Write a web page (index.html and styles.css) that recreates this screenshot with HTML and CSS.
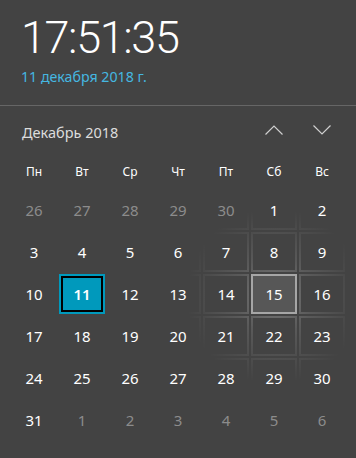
FILE: index.html
```html
<!DOCTYPE html>
<html lang="ru">
<head>
<meta charset="utf-8">
<link rel="stylesheet" href="styles.css">
</head>
<body>
<div class="flyout">
  <div class="clock">
    <div class="time">17:51:35</div>
    <div class="date">11 декабря 2018 г.</div>
  </div>
  <div class="calendar">
    <div class="month-bar">
      <div class="month">Декабрь 2018</div>
      <div class="nav">
        <span class="nav-btn"><svg width="18" height="10" viewBox="0 0 18 10"><path d="M0.5 9.5 L9 1 L17.5 9.5" fill="none" stroke="#d0d0d0" stroke-width="1.2"/></svg></span>
        <span class="nav-btn"><svg width="18" height="10" viewBox="0 0 18 10"><path d="M0.5 0.5 L9 9 L17.5 0.5" fill="none" stroke="#d0d0d0" stroke-width="1.2"/></svg></span>
      </div>
    </div>
    <div class="dow">
      <span>Пн</span><span>Вт</span><span>Ср</span><span>Чт</span><span>Пт</span><span>Сб</span><span>Вс</span>
    </div>
    <div class="days">
      <span class="day other">26</span><span class="day other">27</span><span class="day other">28</span><span class="day other">29</span><span class="day other">30</span><span class="day">1</span><span class="day">2</span>
      <span class="day">3</span><span class="day">4</span><span class="day">5</span><span class="day">6</span><span class="day">7</span><span class="day">8</span><span class="day">9</span>
      <span class="day">10</span><span class="day today">11</span><span class="day">12</span><span class="day">13</span><span class="day">14</span><span class="day hover">15</span><span class="day">16</span>
      <span class="day">17</span><span class="day">18</span><span class="day">19</span><span class="day">20</span><span class="day">21</span><span class="day">22</span><span class="day">23</span>
      <span class="day">24</span><span class="day">25</span><span class="day">26</span><span class="day">27</span><span class="day">28</span><span class="day">29</span><span class="day">30</span>
      <span class="day">31</span><span class="day other">1</span><span class="day other">2</span><span class="day other">3</span><span class="day other">4</span><span class="day other">5</span><span class="day other">6</span>
    </div>
  </div>
</div>
</body>
</html>
```
FILE: styles.css
```css
html, body {
  margin: 0;
  padding: 0;
  background: #434343;
}
body {
  width: 356px;
  height: 458px;
  overflow: hidden;
  font-family: "Noto Sans", "Open Sans", "Liberation Sans", sans-serif;
  color: #fff;
}
.flyout {
  width: 356px;
  height: 458px;
}
.clock {
  height: 106px;
  box-sizing: border-box;
  padding: 9px 0 0 21px;
  border-bottom: 1px solid #666;
}
.time {
  font-family: Roboto, "Open Sans", sans-serif;
  font-weight: 300;
  font-size: 45px;
  line-height: 57px;
  letter-spacing: -1.4px;
  color: #fff;
}
.date {
  margin-top: 1px;
  font-size: 14.2px;
  line-height: 20px;
  color: #45b7e0;
}
.calendar {
  padding: 0 10px;
}
.month-bar {
  height: 52px;
  display: flex;
  align-items: center;
  justify-content: space-between;
}
.month {
  padding-left: 12px;
  font-size: 14.5px;
  color: #dcdcdc;
}
.nav {
  display: flex;
}
.nav-btn {
  width: 48px;
  height: 40px;
  display: flex;
  align-items: center;
  justify-content: center;
  margin-top: -4px;
}
.dow {
  display: grid;
  grid-template-columns: repeat(7, 48px);
  height: 31px;
  line-height: 28px;
  font-size: 12px;
  text-align: center;
  color: #fff;
}
.days {
  display: grid;
  grid-template-columns: repeat(7, 48px);
  grid-auto-rows: 42px;
}
.day {
  margin: 1px;
  border: 2px solid transparent;
  display: flex;
  align-items: center;
  justify-content: center;
  font-size: 15px;
  color: #fff;
  background:
    linear-gradient(#434343, #434343) padding-box,
    radial-gradient(circle 88px at 274px 296px, rgba(255,255,255,0.30), rgba(255,255,255,0.12) 45%, rgba(255,255,255,0) 100%) border-box;
  background-attachment: scroll, fixed;
}
.day.other {
  color: #8c8c8c;
}
.day.today {
  border-color: #0099bc;
  background: #0099bc;
  box-shadow: inset 0 0 0 2px #000;
  font-weight: 600;
}
.day.hover {
  border-color: #a6a6a6;
  background: #575757;
}
```
